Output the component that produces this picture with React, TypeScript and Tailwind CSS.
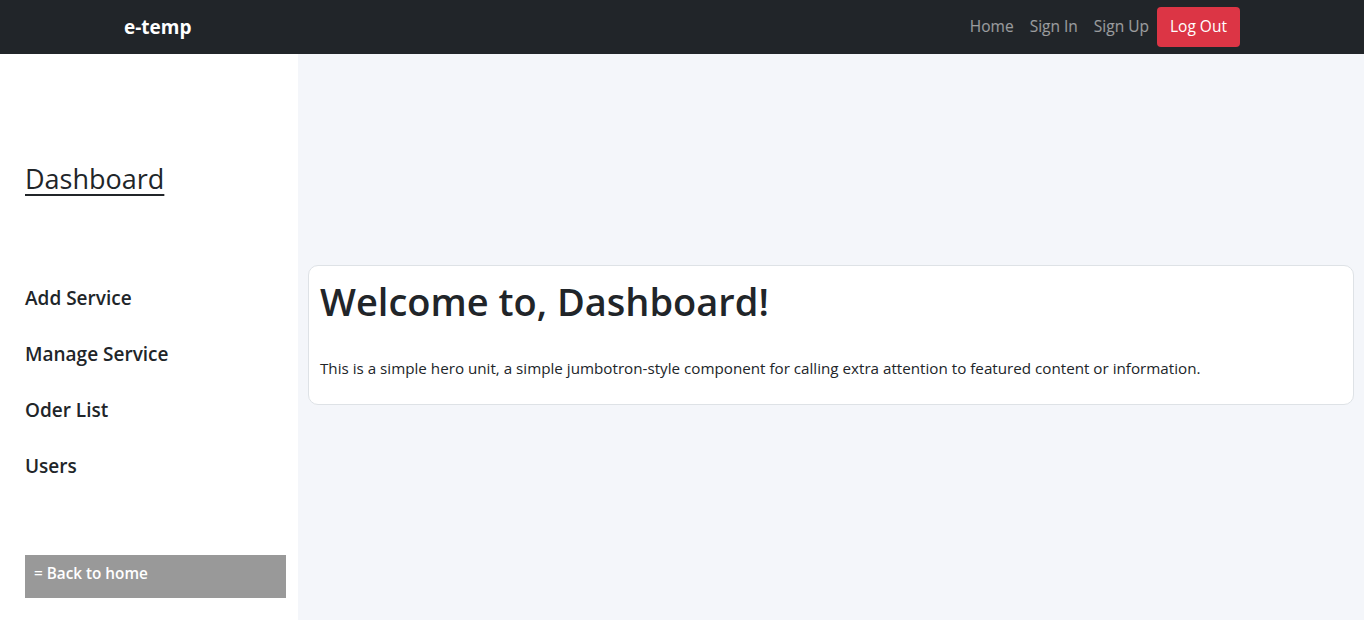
export default function App() {
  return (
    <div className="min-h-screen flex flex-col font-['Segoe_UI','Open_Sans',sans-serif] text-[#212529]">
      {/* Navbar */}
      <nav className="h-[54px] bg-[#212529] shrink-0">
        <div className="max-w-[1140px] mx-auto px-3 h-full flex items-center justify-between">
          <a className="text-white font-bold text-[19px]">e-temp</a>
          <div className="flex items-center text-[15.5px]">
            <a className="px-2 text-white/55">Home</a>
            <a className="px-2 text-white/55">Sign In</a>
            <a className="px-2 text-white/55">Sign Up</a>
            <button className="h-10 w-[83px] rounded bg-[#dc3545] text-white">Log Out</button>
          </div>
        </div>
      </nav>

      <div className="flex flex-1 h-[566px]">
        {/* Sidebar */}
        <aside className="w-[298px] bg-white px-[25px] pt-[108px] pb-[22px] flex flex-col">
          <a className="text-[27px] underline underline-offset-[5px] decoration-2 leading-tight">Dashboard</a>
          <ul className="mt-[88px] flex flex-col gap-[28px]">
            <li className="text-[19px] font-semibold leading-7">Add Service</li>
            <li className="text-[19px] font-semibold leading-7">Manage Service</li>
            <li className="text-[19px] font-semibold leading-7">Oder List</li>
            <li className="text-[19px] font-semibold leading-7">Users</li>
          </ul>
          <button className="mt-auto w-[261px] h-[43px] bg-[#999999] text-white font-semibold text-[15.3px] leading-6 text-left px-[9px] pb-[7px]">
            = Back to home
          </button>
        </aside>

        {/* Main */}
        <main className="flex-1 bg-[#f4f6fa] flex items-center px-[10px] pb-[4px]">
          <div className="w-full bg-white border border-[#dee2e6] rounded-[10px] px-[11px] pt-[12px] pb-[24px]">
            <h1 className="text-[38px] font-semibold leading-[47px]">Welcome to, Dashboard!</h1>
            <p className="mt-[31px] text-[15.2px] leading-6">
              This is a simple hero unit, a simple jumbotron-style component for calling extra attention to featured content or information.
            </p>
          </div>
        </main>
      </div>
    </div>
  );
}
